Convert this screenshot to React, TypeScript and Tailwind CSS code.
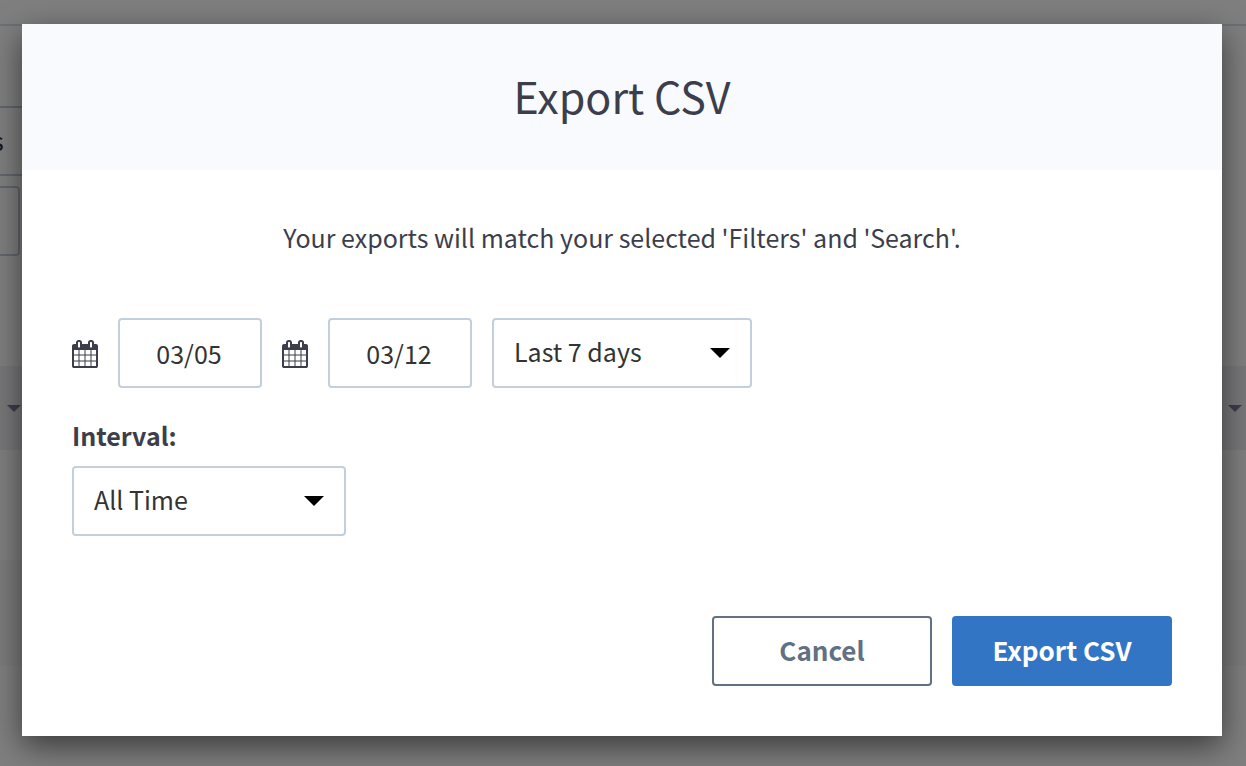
import { useState } from "react";
import type { ReactNode } from "react";

function CalendarIcon() {
  return (
    <svg viewBox="0 0 1664 1792" className="mt-[2px] h-7 w-[26px] shrink-0 fill-[#3c3e4b]" aria-hidden="true">
      <path d="M128 1664h288v-288h-288v288zm352 0h320v-288h-320v288zm-352-352h288v-320h-288v320zm352 0h320v-320h-320v320zm-352-384h288v-288h-288v288zm736 736h320v-288h-320v288zm-384-736h320v-288h-320v288zm768 736h288v-288h-288v288zm-384-352h320v-320h-320v320zm-352-864v-288q0-13-9.5-22.5t-22.5-9.5h-64q-13 0-22.5 9.5t-9.5 22.5v288q0 13 9.5 22.5t22.5 9.5h64q13 0 22.5-9.5t9.5-22.5zm736 864h288v-320h-288v320zm-384-384h320v-288h-320v288zm384 0h288v-288h-288v288zm32-480v-288q0-13-9.5-22.5t-22.5-9.5h-64q-13 0-22.5 9.5t-9.5 22.5v288q0 13 9.5 22.5t22.5 9.5h64q13 0 22.5-9.5t9.5-22.5zm384-64v1280q0 52-38 90t-90 38h-1408q-52 0-90-38t-38-90v-1280q0-52 38-90t90-38h128v-96q0-66 47-113t113-47h64q66 0 113 47t47 113v96h384v-96q0-66 47-113t113-47h64q66 0 113 47t47 113v96h128q52 0 90 38t38 90z" />
    </svg>
  );
}

function Caret({ className }: { className: string }) {
  return (
    <svg viewBox="0 0 20 10" className={className} aria-hidden="true">
      <path d="M0 0H20L10 10Z" />
    </svg>
  );
}

function DateField({ label, initial }: { label: string; initial: string }) {
  const [value, setValue] = useState(initial);
  return (
    <label className="flex items-center gap-5">
      <CalendarIcon />
      <input
        type="text"
        aria-label={label}
        value={value}
        onChange={(e) => setValue(e.target.value)}
        className="h-[70px] w-36 rounded border-2 border-[#c3cfdb] bg-white pr-[2px] text-center text-[25px] text-[#333333]"
      />
    </label>
  );
}

function SelectField({ id, label, width, children }: { id: string; label?: string; width: string; children: ReactNode }) {
  return (
    <div className={`relative ${width}`}>
      <select
        id={id}
        aria-label={label}
        className="h-[70px] w-full appearance-none rounded border-2 border-[#c3cfdb] bg-white pr-12 pb-[2px] pl-5 text-[25px] text-[#333333]"
      >
        {children}
      </select>
      <Caret className="pointer-events-none absolute top-[30px] right-[22px] h-[10px] w-5 fill-black" />
    </div>
  );
}

function BackgroundPage() {
  return (
    <div className="absolute inset-0 flex flex-col overflow-hidden bg-white" aria-hidden="true">
      <div className="h-6 shrink-0" />
      <div className="h-[342px] shrink-0 border-t-2 border-[#d6e0e8]">
        <div className="mt-20 flex h-[70px] w-8 items-center border-y-2 border-[#c3cfdb] text-[25px] text-[#20263f]">
          <span className="-ml-2">s</span>
        </div>
        <div className="mt-[10px] h-[70px] w-5 rounded-r border-2 border-l-0 border-[#c3cfdb]" />
      </div>
      <div className="flex h-[84px] shrink-0 items-center justify-between bg-[#f0f0f6] pr-1 pl-[7px]">
        <Caret className="h-[7px] w-[14px] fill-[#7b7d92]" />
        <Caret className="h-[7px] w-[14px] fill-[#7b7d92]" />
      </div>
      <div className="h-[110px] shrink-0" />
      <div className="h-[106px] shrink-0 bg-[#f9f9f9]" />
    </div>
  );
}

export default function App() {
  return (
    <div className="relative min-h-screen overflow-hidden font-['Noto_Sans_CJK_SC',sans-serif]">
      <BackgroundPage />
      <div className="relative min-h-screen bg-black/50 pt-6 pr-6 pb-[30px] pl-[22px]">
        <section
          role="dialog"
          aria-modal="true"
          aria-labelledby="export-title"
          className="mx-auto max-w-[1200px] bg-white text-[#3c3e4b] shadow-[0_10px_30px_rgba(0,0,0,0.55)]"
        >
          <header className="bg-[#f8fafe] pt-[35px] pb-[39px] text-center">
            <h1 id="export-title" className="text-[43px] leading-[72px]">
              Export CSV
            </h1>
          </header>
          <form className="px-[50px] pt-[47px] pb-[50px]" onSubmit={(e) => e.preventDefault()}>
            <p className="text-center text-[25px] leading-10">
              Your exports will match your selected 'Filters' and 'Search'.
            </p>
            <div className="mt-[61px] flex flex-wrap items-center gap-5">
              <DateField label="Start date" initial="03/05" />
              <DateField label="End date" initial="03/12" />
              <SelectField id="range" label="Date range" width="w-[260px]">
                <option>Last 7 days</option>
              </SelectField>
            </div>
            <label htmlFor="interval" className="mt-[27px] mb-[11px] block text-[25px] leading-10 font-bold">
              Interval:
            </label>
            <SelectField id="interval" width="w-[274px]">
              <option>All Time</option>
            </SelectField>
            <div className="mt-20 flex flex-wrap justify-end gap-5">
              <button
                type="button"
                className="h-[70px] w-[220px] rounded border-2 border-[#627083] bg-white pb-1 text-[26px] font-bold text-[#627083]"
              >
                Cancel
              </button>
              <button
                type="submit"
                className="h-[70px] w-[220px] rounded bg-[#3275c4] pb-1 text-[26px] font-bold text-white"
              >
                Export CSV
              </button>
            </div>
          </form>
        </section>
      </div>
    </div>
  );
}
